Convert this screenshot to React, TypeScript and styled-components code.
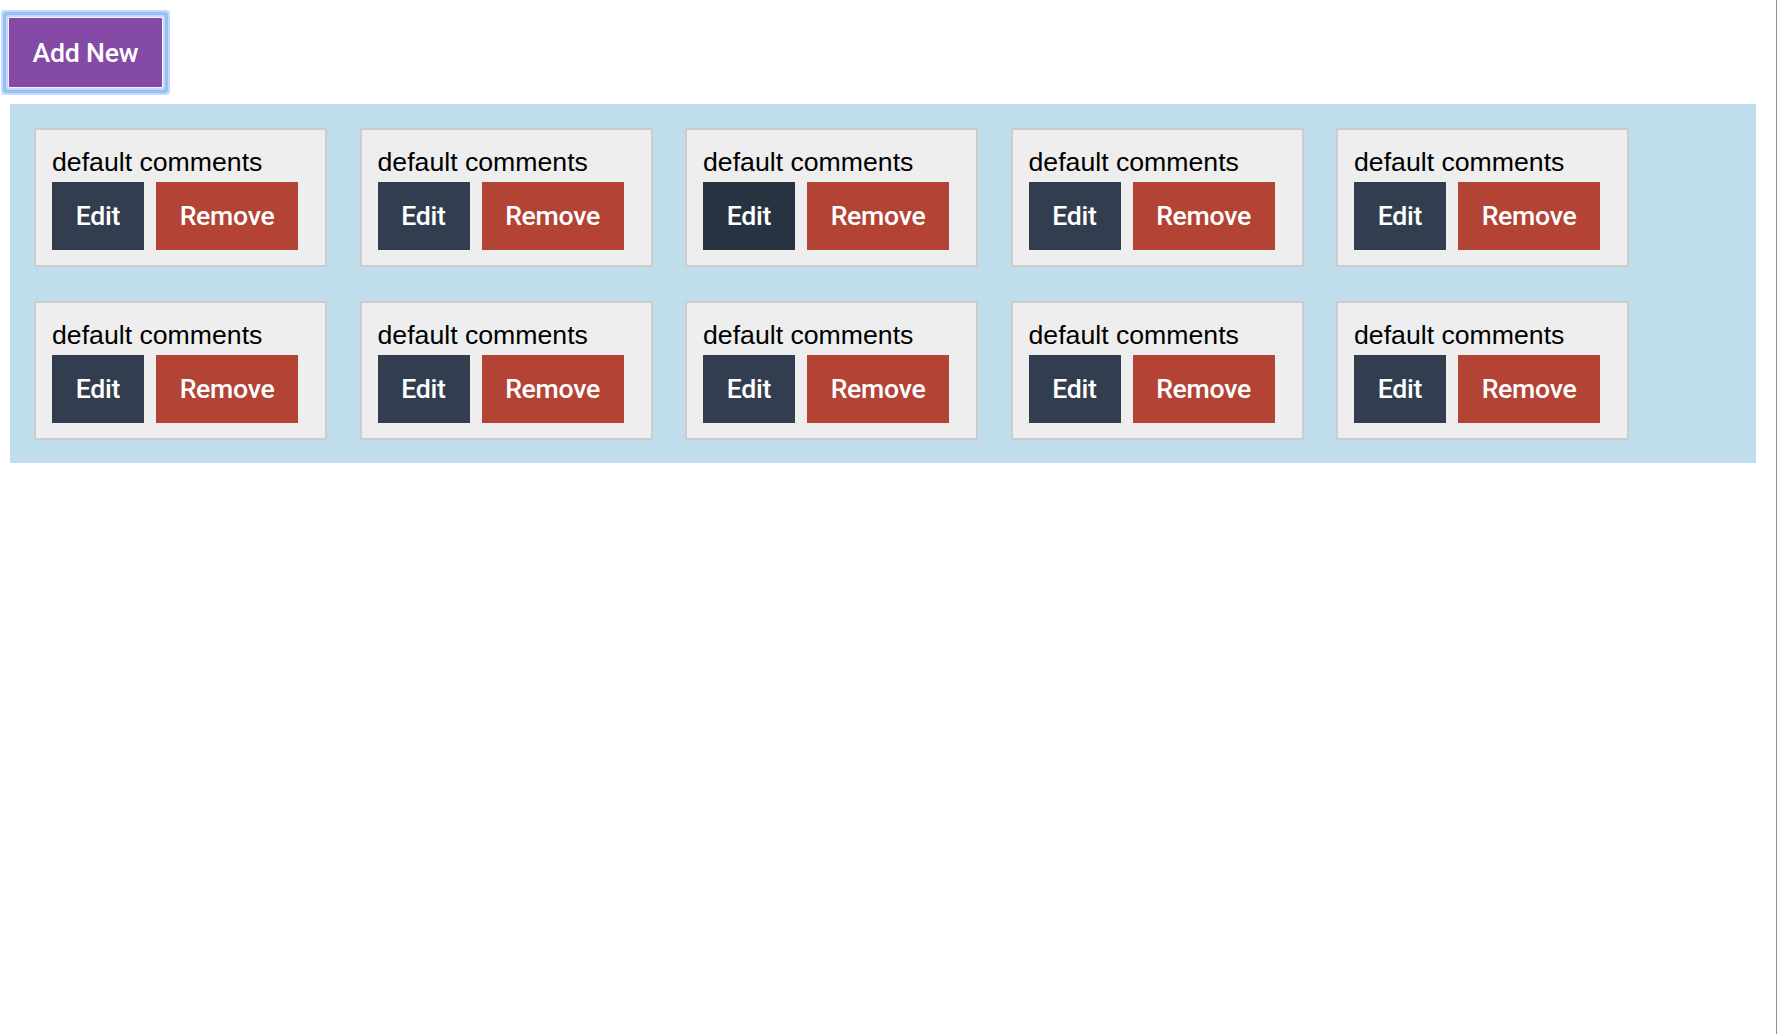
import React, { useState } from 'react'
import styled, { createGlobalStyle } from 'styled-components'

type Comment = {
  id: number
  text: string
}

const initialComments: Comment[] = Array.from({ length: 10 }, (_, i) => ({
  id: i + 1,
  text: 'default comments',
}))

const App: React.FC = () => {
  const [comments, setComments] = useState<Comment[]>(initialComments)

  const handleAdd = () => {
    setComments((prev) => [...prev, { id: Date.now(), text: 'default comments' }])
  }

  const handleRemove = (id: number) => {
    setComments((prev) => prev.filter((c) => c.id !== id))
  }

  return (
    <>
      <GlobalStyle />
      <Page>
        <AddButton onClick={handleAdd}>Add New</AddButton>
        <Board>
          {comments.map((comment, index) => (
            <Note key={comment.id}>
              <NoteText>{comment.text}</NoteText>
              <NoteActions>
                <ActionButton $variant="edit" $hovered={index === 2}>
                  Edit
                </ActionButton>
                <ActionButton $variant="remove" onClick={() => handleRemove(comment.id)}>
                  Remove
                </ActionButton>
              </NoteActions>
            </Note>
          ))}
        </Board>
      </Page>
    </>
  )
}

const GlobalStyle = createGlobalStyle`
  html {
    background: linear-gradient(to left, #8e8e8e 1px, #ffffff 1px);
    min-height: 100%;
  }
  body {
    margin: 0;
    font-family: "Liberation Sans", Arial, sans-serif;
  }
  * {
    box-sizing: border-box;
  }
`

const Page = styled.div`
  padding: 18px 0 0 10px;
  width: 1756px;
`

const AddButton = styled.button`
  display: block;
  margin: 0 0 17px -1px;
  width: 153px;
  height: 69px;
  padding: 0;
  border: none;
  border-radius: 1px;
  background-color: #8549a6;
  color: #ffffff;
  font-family: Roboto, "Liberation Sans", sans-serif;
  font-size: 26.67px;
  font-weight: 500;
  letter-spacing: -0.2px;
  cursor: pointer;
  box-shadow: 0 0 0 1px #eef3fd, 0 0 0 3px #c4dafa, 0 0 0 6px #97c0f4, 0 0 0 8px #c4dafa;
`

const Board = styled.div`
  display: flex;
  flex-wrap: wrap;
  column-gap: 32.5px;
  row-gap: 34px;
  padding: 24px 24px 23px 24px;
  background-color: #c0ddec;
`

const Note = styled.div`
  width: 293px;
  padding: 17px 16px 15px;
  background-color: #eeeeee;
  border: 2px solid #cccccc;
`

const NoteText = styled.div`
  font-family: "Liberation Sans", Arial, sans-serif;
  font-size: 26.67px;
  line-height: 31px;
  color: #000000;
  margin-bottom: 4px;
  white-space: nowrap;
`

const NoteActions = styled.div`
  display: flex;
  gap: 12px;
`

const ActionButton = styled.button<{ $variant: 'edit' | 'remove'; $hovered?: boolean }>`
  height: 68px;
  width: ${({ $variant }) => ($variant === 'edit' ? '92px' : '142px')};
  padding: 0;
  border: none;
  color: #ffffff;
  font-family: Roboto, "Liberation Sans", sans-serif;
  font-size: 26.67px;
  font-weight: 500;
  letter-spacing: -0.3px;
  cursor: pointer;
  background-color: ${({ $variant, $hovered }) =>
    $variant === 'remove' ? '#b24335' : $hovered ? '#273341' : '#323e4f'};
  :hover {
    filter: brightness(0.85);
  }
`

export default App
